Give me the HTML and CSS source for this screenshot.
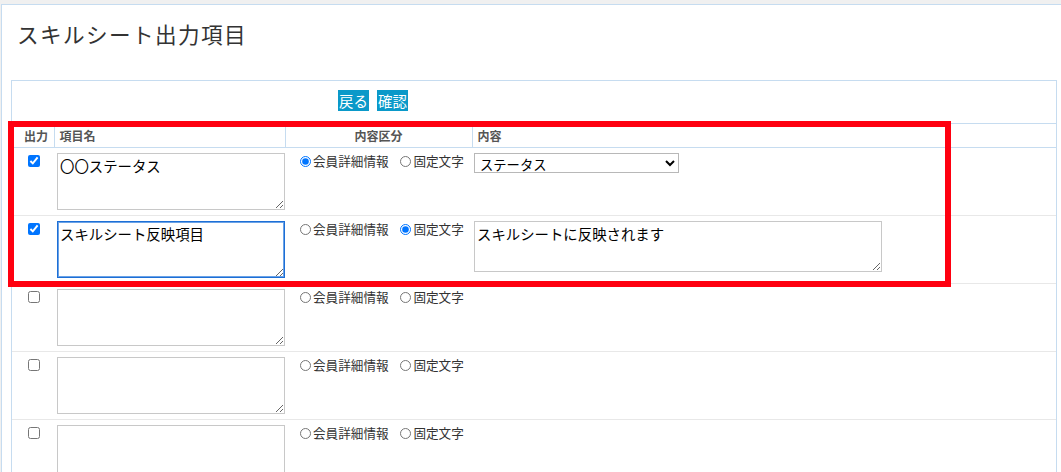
FILE: index.html
```html
<!DOCTYPE html>
<html lang="ja">
<head>
    <meta charset="UTF-8">
    <meta name="viewport" content="width=device-width, initial-scale=1.0">
    <title>スキルシート出力項目</title>
    <link rel="stylesheet" href="styles.css">
</head>
<body>
    <div class="page">
        <h1 class="page-title">スキルシート出力項目</h1>

        <div class="panel">
            <div class="toolbar">
                <button class="btn">戻る</button>
                <button class="btn">確認</button>
            </div>

            <table class="items">
                <colgroup>
                    <col class="w-out">
                    <col class="w-name">
                    <col class="w-kind">
                    <col>
                </colgroup>
                <thead>
                    <tr>
                        <th>出力</th>
                        <th>項目名</th>
                        <th class="center">内容区分</th>
                        <th>内容</th>
                    </tr>
                </thead>
                <tbody>
                    <tr>
                        <td class="cell-check"><input type="checkbox" checked></td>
                        <td class="cell-name"><textarea class="name-box">〇〇ステータス</textarea></td>
                        <td class="cell-kind">
                            <label><input type="radio" name="k1" checked>会員詳細情報</label>
                            <label><input type="radio" name="k1">固定文字</label>
                        </td>
                        <td class="cell-value">
                            <select class="value-select">
                                <option>ステータス</option>
                            </select>
                        </td>
                    </tr>
                    <tr>
                        <td class="cell-check"><input type="checkbox" checked></td>
                        <td class="cell-name"><textarea class="name-box is-focus">スキルシート反映項目</textarea></td>
                        <td class="cell-kind">
                            <label><input type="radio" name="k2">会員詳細情報</label>
                            <label><input type="radio" name="k2" checked>固定文字</label>
                        </td>
                        <td class="cell-value">
                            <textarea class="value-box">スキルシートに反映されます</textarea>
                        </td>
                    </tr>
                    <tr>
                        <td class="cell-check"><input type="checkbox"></td>
                        <td class="cell-name"><textarea class="name-box"></textarea></td>
                        <td class="cell-kind">
                            <label><input type="radio" name="k3">会員詳細情報</label>
                            <label><input type="radio" name="k3">固定文字</label>
                        </td>
                        <td class="cell-value"></td>
                    </tr>
                    <tr>
                        <td class="cell-check"><input type="checkbox"></td>
                        <td class="cell-name"><textarea class="name-box"></textarea></td>
                        <td class="cell-kind">
                            <label><input type="radio" name="k4">会員詳細情報</label>
                            <label><input type="radio" name="k4">固定文字</label>
                        </td>
                        <td class="cell-value"></td>
                    </tr>
                    <tr>
                        <td class="cell-check"><input type="checkbox"></td>
                        <td class="cell-name"><textarea class="name-box"></textarea></td>
                        <td class="cell-kind">
                            <label><input type="radio" name="k5">会員詳細情報</label>
                            <label><input type="radio" name="k5">固定文字</label>
                        </td>
                        <td class="cell-value"></td>
                    </tr>
                </tbody>
            </table>
        </div>
    </div>

    <!-- 注目枠 -->
    <div class="highlight"></div>
</body>
</html>
```

FILE: styles.css
```css
body {
    margin: 0;
    padding: 0;
    background-color: #f0f0f0;
    font-family: "Noto Sans CJK JP", "Noto Sans", sans-serif;
    color: #333;
    position: relative;
    overflow: hidden;
}

.page {
    margin: 4px 0 0 1px;
    background: #fff;
    border-top: 1px solid #c6dcf0;
    border-left: 1px solid #c6dcf0;
    padding: 0 4px 0 9px;
    min-height: 600px;
}

.page-title {
    margin: 0 0 31px 0;
    padding: 14px 0 0 6px;
    font-size: 21.6px;
    font-weight: normal;
    line-height: 30px;
    letter-spacing: 1.4px;
    color: #333;
}

.panel {
    border: 1px solid #c6dcf0;
    background: #fff;
}

.toolbar {
    display: flex;
    gap: 8px;
    height: 42px;
    box-sizing: border-box;
    padding: 9px 0 0 326px;
}

.btn {
    height: 21px;
    width: 31px;
    padding: 0;
    border: none;
    background-color: #0a99c9;
    color: #fff;
    font-family: inherit;
    font-size: 14.4px;
    line-height: 21px;
    cursor: pointer;
}

.items {
    width: 100%;
    border-collapse: collapse;
    table-layout: fixed;
}

.w-out { width: 42px; }
.w-name { width: 231px; }
.w-kind { width: 187px; }

.items th {
    height: 23px;
    padding: 0 0 0 5px;
    border-top: 1px solid #c6dcf0;
    border-bottom: 1px solid #c6dcf0;
    border-left: 1px solid #c6dcf0;
    font-size: 12px;
    font-weight: bold;
    color: #555;
    text-align: left;
    line-height: 23px;
}

.items th:first-child {
    border-left: none;
    padding-left: 12px;
}

.items th.center {
    text-align: center;
    padding-left: 0;
}

.items td {
    vertical-align: top;
    border-bottom: 1px solid #e8e8e8;
    padding: 0;
}

.cell-check {
    padding-top: 7px !important;
    line-height: 0;
}

.cell-check input {
    display: block;
    width: 12px;
    height: 12px;
    margin: 0 0 0 16px;
}

.cell-name {
    padding: 5px 0 5px 3px !important;
}

textarea {
    display: block;
    box-sizing: border-box;
    border: 1px solid #c8c8c8;
    padding: 2px;
    font-family: inherit;
    font-size: 14.4px;
    line-height: 20px;
    color: #000;
    outline: none;
}

.name-box {
    width: 228px;
    height: 57px;
}

.name-box.is-focus {
    border-color: #1d6fd6;
    box-shadow: inset 0 0 0 1px #6aa2e6;
}

.cell-kind {
    padding: 5px 0 0 15px !important;
    font-size: 12.6px;
    line-height: 16px;
    white-space: nowrap;
}

.cell-kind label {
    margin-right: 9px;
}

.cell-kind input {
    width: 11px;
    height: 11px;
    margin: 0 2px 0 0;
    vertical-align: -1px;
}

.cell-value {
    padding: 5px 0 0 2px !important;
}

.value-select {
    display: block;
    width: 205px;
    height: 20px;
    border: 1px solid #b8b8b8;
    border-radius: 0;
    background: #fff;
    font-family: inherit;
    font-size: 13.3px;
    color: #000;
    padding: 0 1px;
}

.value-box {
    width: 408px;
    height: 51px;
}

.highlight {
    position: absolute;
    left: 8px;
    top: 121px;
    width: 943px;
    height: 166px;
    box-sizing: border-box;
    border: 6px solid #ff0010;
    pointer-events: none;
}
```
